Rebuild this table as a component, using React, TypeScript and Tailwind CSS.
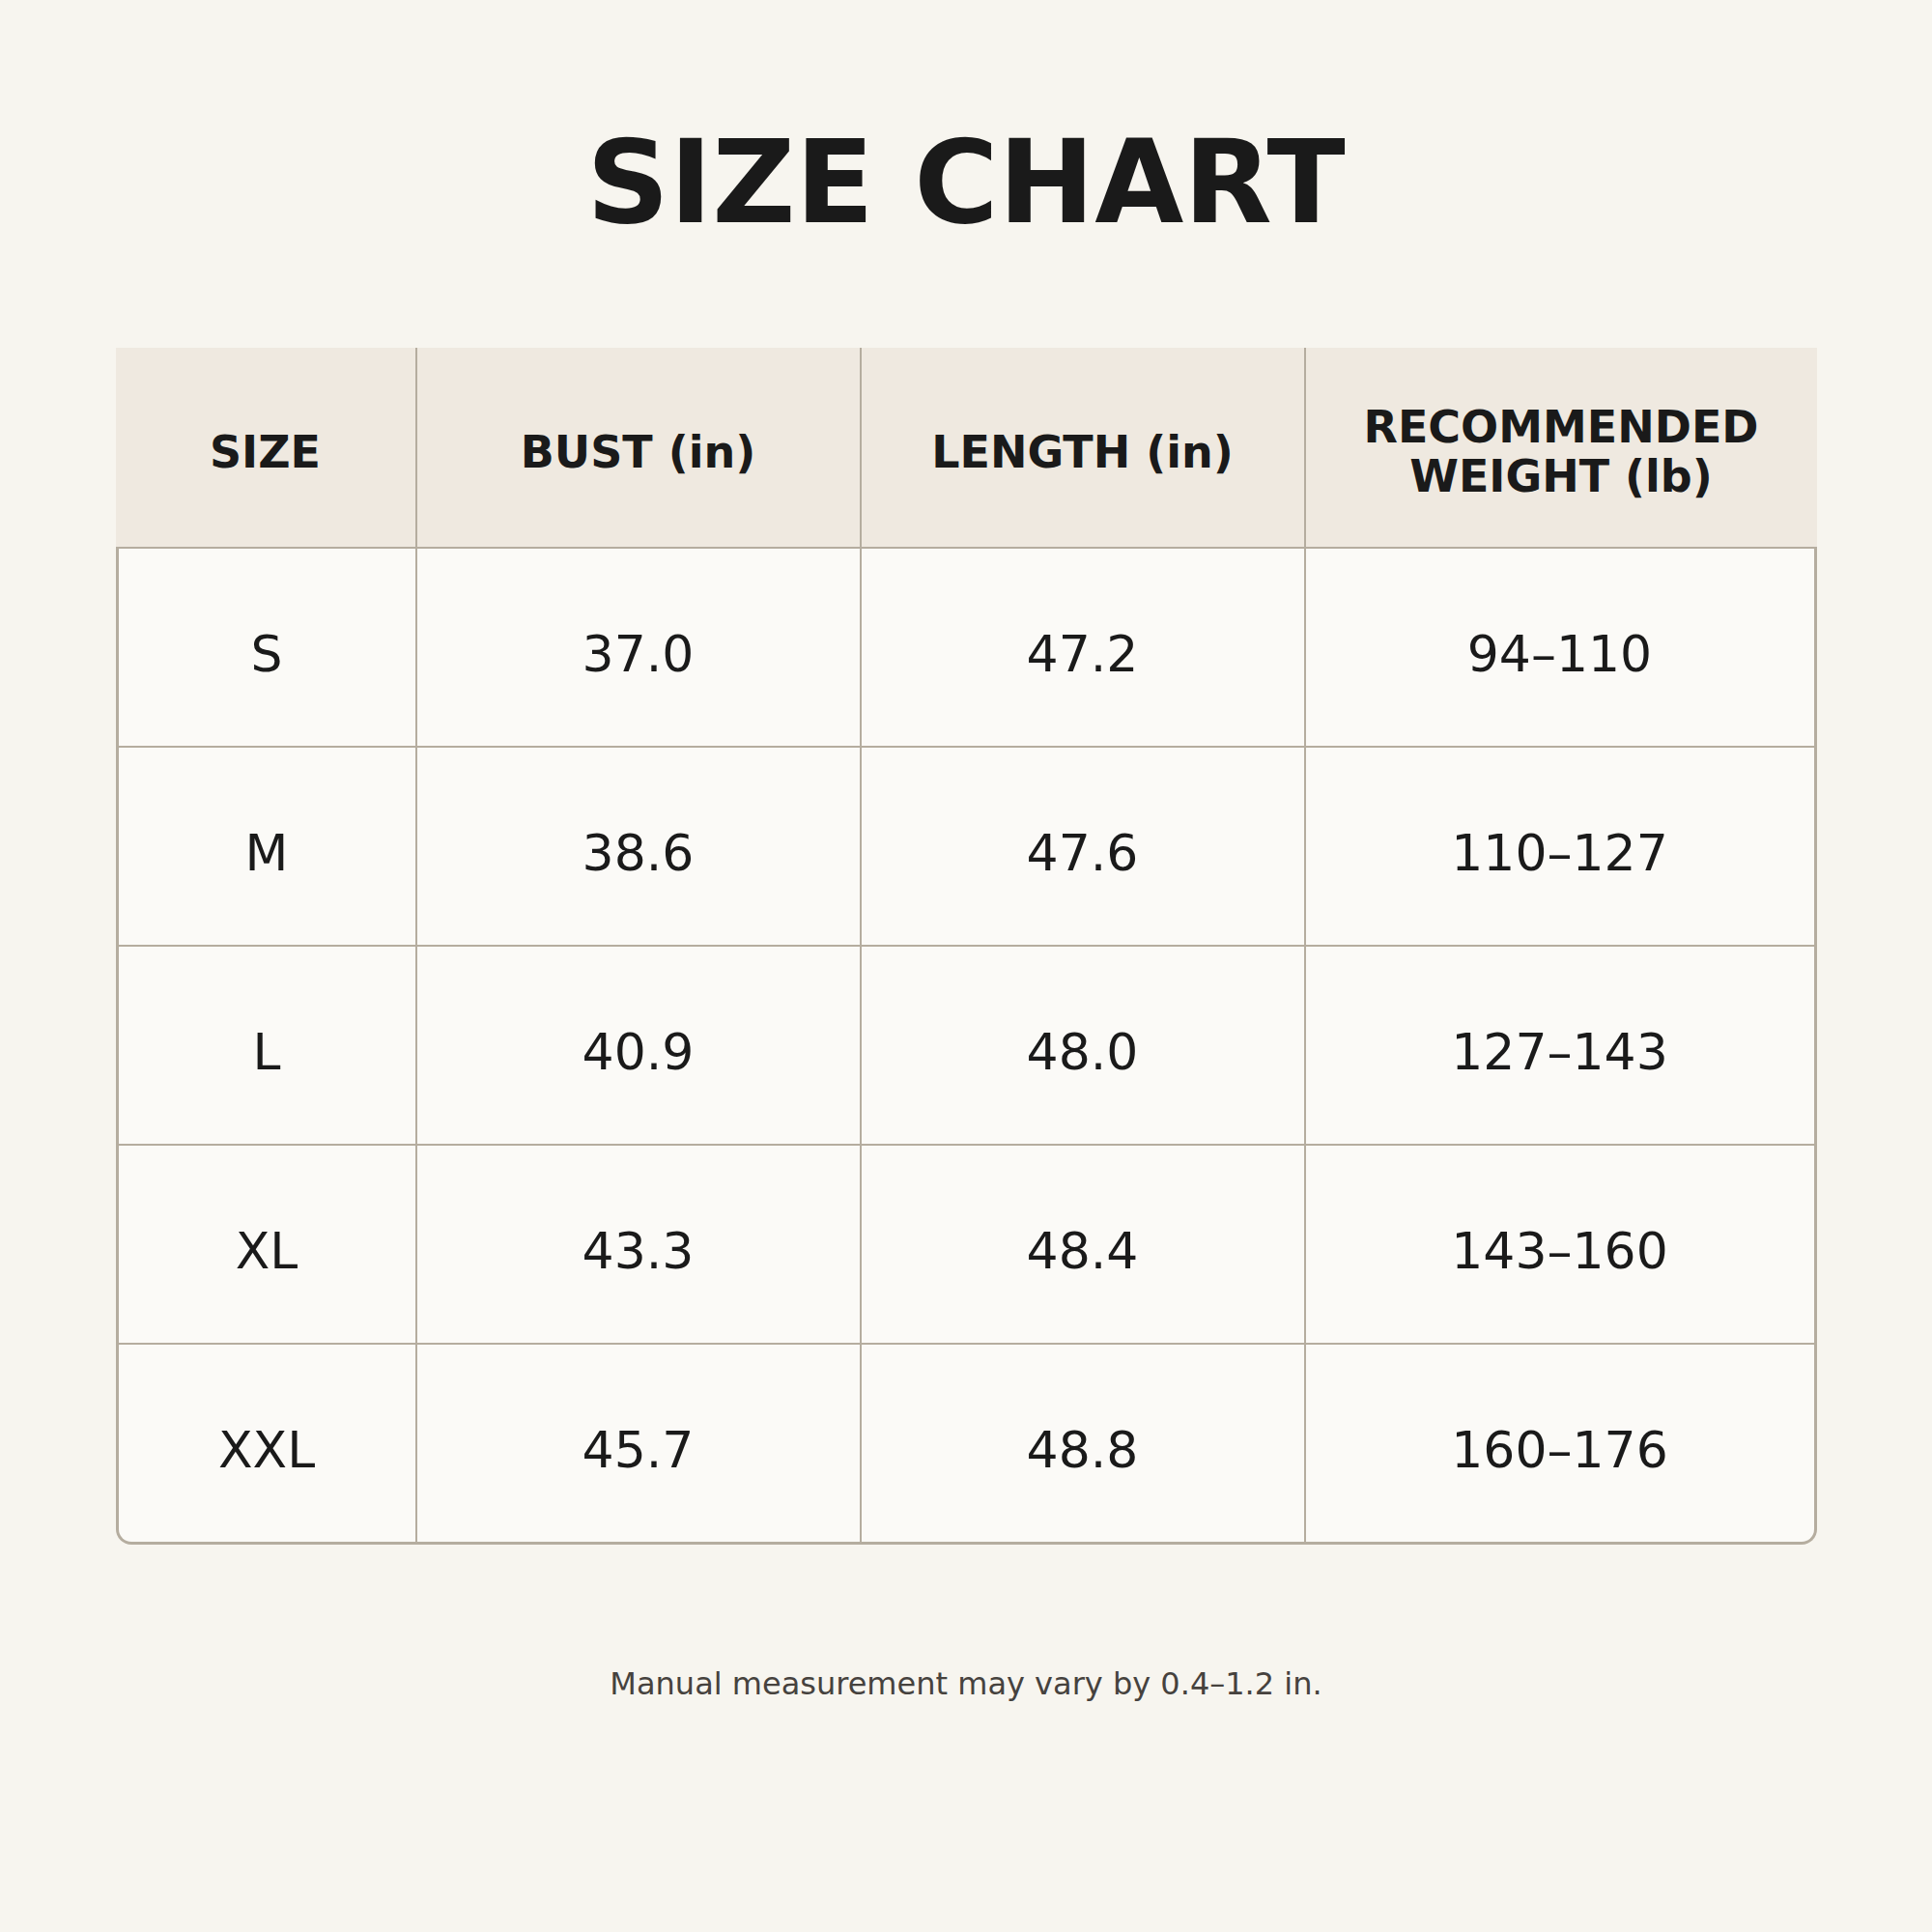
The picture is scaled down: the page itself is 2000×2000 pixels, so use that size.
import React from "react";

const rows = [
  ["S", "37.0", "47.2", "94–110"],
  ["M", "38.6", "47.6", "110–127"],
  ["L", "40.9", "48.0", "127–143"],
  ["XL", "43.3", "48.4", "143–160"],
  ["XXL", "45.7", "48.8", "160–176"],
];

export default function App() {
  return (
    <div
      className="w-[2000px] h-[2000px] bg-[#f7f5ef] flex flex-col items-center text-[#1a1a1a]"
      style={{ fontFamily: '"DejaVu Sans", "Liberation Sans", sans-serif' }}
    >
      <h1 className="mt-[130px] text-[119px] leading-none font-bold tracking-normal">SIZE CHART</h1>

      <div className="mt-[111px] w-[1761px]">
        <div className="grid grid-cols-[310px_460px_460px_531px] h-[206px] bg-[#efe9e0] text-[46px] font-bold leading-[1.1]">
          <div className="flex items-center justify-center text-center pt-[10px]">SIZE</div>
          <div className="flex items-center justify-center text-center pt-[10px] border-l-2 border-[#b5ad9f]">BUST (in)</div>
          <div className="flex items-center justify-center text-center pt-[10px] border-l-2 border-[#b5ad9f]">LENGTH (in)</div>
          <div className="flex items-center justify-center text-center pt-[10px] border-l-2 border-[#b5ad9f]">
            RECOMMENDED
            <br />
            WEIGHT (lb)
          </div>
        </div>
        <div className="border-x-[3px] border-b-[3px] border-[#b5ad9f] rounded-b-[16px] bg-[#fbfaf7] overflow-hidden">
          {rows.map((r, i) => (
            <div
              key={i}
              className="grid grid-cols-[307px_460px_460px_528px] h-[206px] border-t-2 border-[#b5ad9f] text-[52px] leading-none"
            >
              <div className="flex items-center justify-center pt-[13px]">{r[0]}</div>
              <div className="flex items-center justify-center pt-[13px] border-l-2 border-[#b5ad9f]">{r[1]}</div>
              <div className="flex items-center justify-center pt-[13px] border-l-2 border-[#b5ad9f]">{r[2]}</div>
              <div className="flex items-center justify-center pt-[13px] border-l-2 border-[#b5ad9f]">{r[3]}</div>
            </div>
          ))}
        </div>
      </div>

      <p className="mt-[128px] text-[32px] leading-none text-[#46423e]">
        Manual measurement may vary by 0.4–1.2 in.
      </p>
    </div>
  );
}
